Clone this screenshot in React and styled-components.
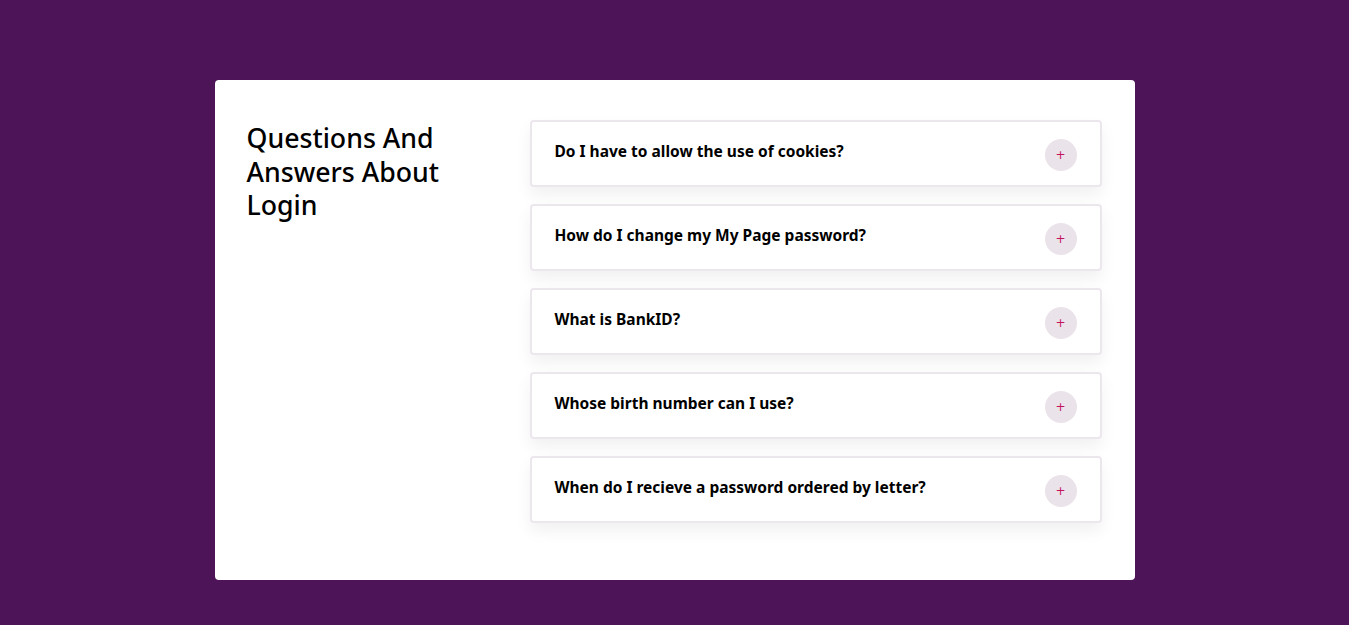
import React from "react";
import styled, { createGlobalStyle } from "styled-components";

const GlobalStyle = createGlobalStyle`
  * {
    box-sizing: border-box;
  }
  body {
    margin: 0;
    background: #4d1457;
    font-family: "Noto Sans", "Open Sans", sans-serif;
  }
`;

const Page = styled.div`
  min-height: 625px;
  padding-top: 80px;
  display: flex;
  justify-content: center;
  align-items: flex-start;
`;

const Card = styled.section`
  width: 920px;
  height: 500px;
  background: #fff;
  border-radius: 4px;
  padding: 40px 33px 40px 32px;
  display: grid;
  grid-template-columns: 1fr 572px;
  align-items: start;
`;

const Title = styled.h2`
  margin: 1px 0 0;
  font-size: 26.7px;
  font-weight: 500;
  line-height: 33.5px;
  color: #000;
  max-width: 220px;
`;

const List = styled.div`
  display: flex;
  flex-direction: column;
  gap: 17px;
`;

const Item = styled.div`
  height: 67px;
  border: 2px solid #ece6ed;
  border-radius: 4px;
  background: #fff;
  box-shadow: 0 8px 16px rgba(0, 0, 0, 0.06);
  padding: 0 23px;
  display: flex;
  justify-content: space-between;
  align-items: center;
`;

const Question = styled.h3`
  margin: 0 0 6px;
  font-size: 15.5px;
  font-weight: 700;
  color: #000;
`;

const Toggle = styled.button`
  width: 32px;
  height: 32px;
  border-radius: 50%;
  border: none;
  background: #ebe3ea;
  color: #c4125e;
  font-family: "DejaVu Sans", sans-serif;
  font-size: 12px;
  line-height: 1;
  padding: 0;
  margin-top: 2px;
  display: flex;
  align-items: center;
  justify-content: center;
  cursor: pointer;
`;

const questions = [
  "Do I have to allow the use of cookies?",
  "How do I change my My Page password?",
  "What is BankID?",
  "Whose birth number can I use?",
  "When do I recieve a password ordered by letter?",
];

export default function App() {
  return (
    <>
      <GlobalStyle />
      <Page>
        <Card>
          <Title>Questions And Answers About Login</Title>
          <List>
            {questions.map((q) => (
              <Item key={q}>
                <Question>{q}</Question>
                <Toggle aria-label="Expand">+</Toggle>
              </Item>
            ))}
          </List>
        </Card>
      </Page>
    </>
  );
}
